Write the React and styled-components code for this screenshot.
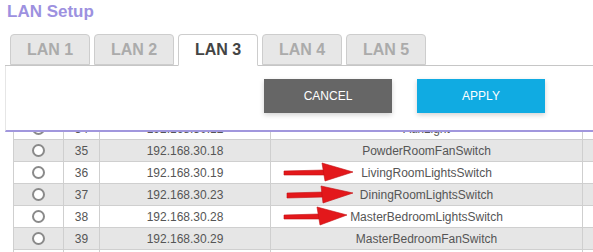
import React from 'react'
import styled, { createGlobalStyle } from 'styled-components'

const GlobalStyle = createGlobalStyle`
  html, body { margin: 0; padding: 0; background: #fff; }
  body { font-family: 'Liberation Sans', Arial, sans-serif; }
  #root { width: 593px; height: 252px; overflow: hidden; }
`

const Page = styled.div`
  position: relative;
  width: 593px;
  height: 252px;
  overflow: hidden;
  background: #fff;
`

const Title = styled.h1`
  margin: 0;
  padding: 2px 0 0 7px;
  font-size: 17px;
  line-height: 20px;
  font-weight: bold;
  color: #9d91e0;
`

const TabBar = styled.div`
  display: flex;
  gap: 4px;
  margin: 12px 0 0 5px;
  padding-left: 5px;
  height: 31px;
  border-bottom: 1px solid #c6c6c6;
`

const Tab = styled.div`
  box-sizing: border-box;
  width: 80px;
  height: ${p => (p.$active ? '32px' : '31px')};
  border: 1px solid #cdcdcd;
  border-bottom: ${p => (p.$active ? '1px solid #fff' : '1px solid #cdcdcd')};
  border-radius: 4px 4px 0 0;
  background: ${p => (p.$active ? '#fff' : '#e7e7e7')};
  color: ${p => (p.$active ? '#444' : '#ababab')};
  font-size: 16px;
  font-weight: bold;
  display: flex;
  align-items: center;
  justify-content: center;
  z-index: 1;
`

const Panel = styled.div`
  position: relative;
  z-index: 2;
  margin-left: 5px;
  height: 64px;
  padding: 13px 0 0 258px;
  box-sizing: border-box;
  border-left: 1px solid #e6e6e6;
  border-bottom: 2px solid #a197dd;
  background: #fff;
  display: flex;
  gap: 25px;
  height: 66px;
`

const Button = styled.button`
  width: 128px;
  height: 34px;
  border: none;
  border-radius: 0;
  background: ${p => p.$bg};
  color: #fff;
  font-family: 'Liberation Sans', Arial, sans-serif;
  font-size: 12px;
  box-shadow: 0 2px 5px rgba(0, 0, 0, 0.18);
  cursor: pointer;
`

const Viewport = styled.div`
  height: 120px;
  overflow: hidden;
  padding-left: 13px;
`

const Table = styled.div`
  margin-top: -14px;
  width: 620px;
  color: #555;
  font-size: 12px;
`

const Row = styled.div`
  display: grid;
  grid-template-columns: 50px 36px 171px 312px 51px;
  height: 22px;
  box-sizing: border-box;
  border-bottom: 1px solid #cfcfcf;
  background: ${p => (p.$odd ? '#e6e6e6' : '#fff')};
`

const Cell = styled.div`
  border-left: 1px solid #cfcfcf;
  display: flex;
  align-items: center;
  justify-content: center;
  white-space: nowrap;
`

const Radio = styled.span`
  box-sizing: border-box;
  width: 13px;
  height: 13px;
  border: 2px solid #8a8a8a;
  border-radius: 50%;
  background: #fff;
`

const Overlay = styled.svg`
  position: absolute;
  left: 0;
  top: 0;
  pointer-events: none;
  z-index: 3;
`

const tabs = ['LAN 1', 'LAN 2', 'LAN 3', 'LAN 4', 'LAN 5']

const rows = [
  { n: 34, ip: '192.168.30.12', name: 'AuxLight' },
  { n: 35, ip: '192.168.30.18', name: 'PowderRoomFanSwitch' },
  { n: 36, ip: '192.168.30.19', name: 'LivingRoomLightsSwitch' },
  { n: 37, ip: '192.168.30.23', name: 'DiningRoomLightsSwitch' },
  { n: 38, ip: '192.168.30.28', name: 'MasterBedroomLightsSwitch' },
  { n: 39, ip: '192.168.30.29', name: 'MasterBedroomFanSwitch' },
  { n: 40, ip: '192.168.30.31', name: 'GarageLights' },
]

// red annotation arrows: shaft then head
const arrows = [
  { shaft: '284,171 325,170 325,175 284,175', head: '322,163 353,172 325,181' },
  { shaft: '287,193 324,192 324,197 287,198', head: '321,186 353,193 323,203' },
  { shaft: '284,215 320,214 320,219 284,219', head: '317,207 347,215 320,225' },
]

export default function App() {
  return (
    <Page>
      <GlobalStyle />
      <Title>LAN Setup</Title>
      <TabBar>
        {tabs.map(t => (
          <Tab key={t} $active={t === 'LAN 3'}>{t}</Tab>
        ))}
      </TabBar>
      <Panel>
        <Button $bg="#666666">CANCEL</Button>
        <Button $bg="#10abe2">APPLY</Button>
      </Panel>
      <Viewport>
        <Table>
          {rows.map(r => (
            <Row key={r.n} $odd={r.n % 2 === 1}>
              <Cell><Radio /></Cell>
              <Cell>{r.n}</Cell>
              <Cell>{r.ip}</Cell>
              <Cell>{r.name}</Cell>
              <Cell />
            </Row>
          ))}
        </Table>
      </Viewport>
      <Overlay width="593" height="252" viewBox="0 0 593 252">
        {arrows.map((a, i) => (
          <g key={i} fill="#e3181b" stroke="#c40f12" strokeWidth="0.6">
            <polygon points={a.shaft} />
            <polygon points={a.head} />
          </g>
        ))}
      </Overlay>
    </Page>
  )
}
